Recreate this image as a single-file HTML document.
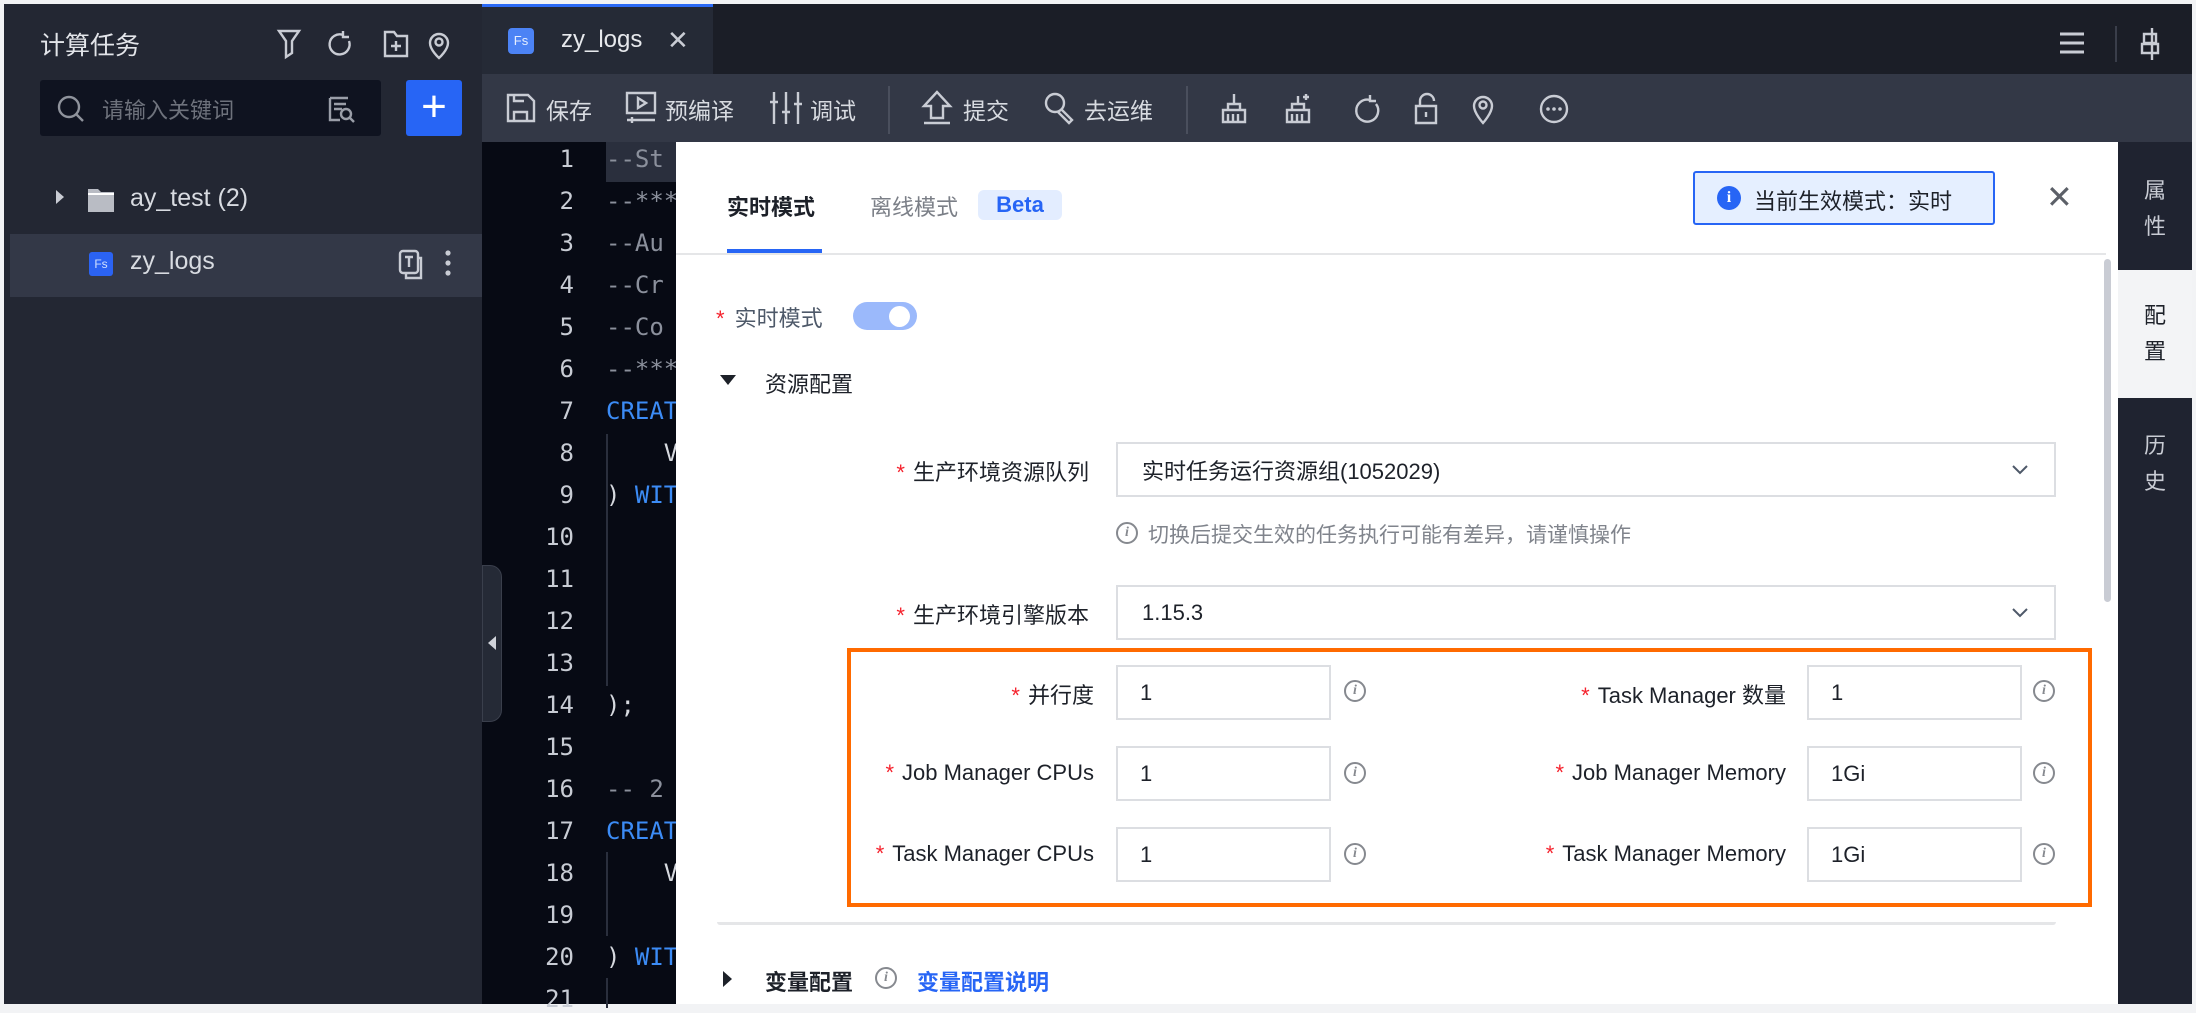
<!DOCTYPE html>
<html><head><meta charset="utf-8"><style>
*{box-sizing:border-box;margin:0;padding:0}
body{width:2196px;height:1008px;background:#f2f3f5;position:relative;overflow:hidden;font-family:"Liberation Sans","Noto Sans CJK SC",sans-serif}
.a{position:absolute}
.ic{stroke:#c9ccd4;fill:none;stroke-width:2.4}
.code{font-family:"DejaVu Sans Mono","Liberation Mono",monospace;font-size:24px;white-space:pre}
.ln{position:absolute;left:500px;width:74px;text-align:right;color:#c8ccd4}
.ct{position:absolute;left:606px;color:#8b909c}
.bl{color:#3c8cf6}
.wh{color:#d6d9df}
.lab{position:absolute;font-size:22px;color:#1d2129;text-align:right;white-space:nowrap}
.req{color:#f5222d;margin-right:8px}
.inp{position:absolute;border:2px solid #dcdee2;background:#fff;font-size:22px;color:#1d2129;padding-left:22px;display:flex;align-items:center}
.info{position:absolute;width:22px;height:22px;border:2px solid #86898f;border-radius:50%;color:#86898f;font-size:14px;font-style:italic;font-weight:bold;text-align:center;line-height:18px;font-family:"Liberation Serif",serif}
</style></head><body>
<div class="a" style="left:4px;top:4px;width:478px;height:1000px;background:#232733"></div>
<div class="a" style="left:40px;top:26px;font-size:25px;color:#e2e4e9">计算任务</div>
<svg class="a" style="left:275px;top:26px" width="180" height="36" viewBox="0 0 180 36">
<path class="ic" d="M4 5h20l-7 10v12l-6 4V15z"/>
<path class="ic" d="M68 9a10 10 0 1 0 6 6M68 5v6h6" />
<path class="ic" d="M110 6h9l3 4h10v20h-22z M121 15v10M116 20h10"/>
<path class="ic" d="M173 17a9 9 0 1 0-18 0c0 7 9 15 9 15s9-8 9-15z"/><circle class="ic" cx="164" cy="16" r="3.5"/>
</svg>
<div class="a" style="left:40px;top:80px;width:341px;height:56px;background:#0f1320;border-radius:3px"></div>
<svg class="a" style="left:56px;top:94px" width="30" height="30"><circle class="ic" cx="13" cy="13" r="10" style="stroke:#8f939c"/><path class="ic" d="M20 20l7 7" style="stroke:#8f939c"/></svg>
<div class="a" style="left:102px;top:93px;font-size:22px;color:#6e727c">请输入关键词</div>
<svg class="a" style="left:326px;top:94px" width="30" height="30"><path class="ic" d="M4 4h18M4 4v22h10M8 10h12M8 15h8" style="stroke:#9a9ea8"/><circle class="ic" cx="20" cy="20" r="5" style="stroke:#9a9ea8"/><path class="ic" d="M24 24l4 4" style="stroke:#9a9ea8"/></svg>
<div class="a" style="left:406px;top:80px;width:56px;height:56px;background:#2765f5;border-radius:3px;color:#fff;font-size:44px;line-height:54px;text-align:center;font-weight:300">+</div>
<div class="a" style="left:56px;top:190px;width:0;height:0;border-left:8px solid #c9ccd4;border-top:7px solid transparent;border-bottom:7px solid transparent"></div>
<svg class="a" style="left:86px;top:185px" width="30" height="30"><path d="M2 4h10l3 3h13v20H2z" fill="#b9bcc4"/><path d="M2 9h26" stroke="#fff" stroke-width="2"/></svg>
<div class="a" style="left:130px;top:184px;font-size:25px;color:#d8dbe1">ay_test (2)</div>
<div class="a" style="left:10px;top:234px;width:472px;height:63px;background:#333847"></div>
<div class="a" style="left:89px;top:252px;width:24px;height:24px;background:#2b63f3;border-radius:3px;color:#cfe0ff;font-size:12px;text-align:center;line-height:24px">Fs</div>
<div class="a" style="left:130px;top:247px;font-size:25px;color:#d8dbe1">zy_logs</div>
<svg class="a" style="left:398px;top:248px" width="56" height="34"><rect class="ic" x="2" y="3" width="18" height="22" rx="3"/><path class="ic" d="M7 9h8M11 9v10M20 10h3v20H8v-5"/><circle cx="50" cy="5" r="2.6" fill="#c9ccd4"/><circle cx="50" cy="15" r="2.6" fill="#c9ccd4"/><circle cx="50" cy="25" r="2.6" fill="#c9ccd4"/></svg>

<div class="a" style="left:482px;top:4px;width:1710px;height:70px;background:#1b1e27"></div>
<div class="a" style="left:482px;top:4px;width:231px;height:70px;background:#252a36;border-top:3px solid #2b6af5"></div>
<div class="a" style="left:508px;top:28px;width:26px;height:26px;background:#4c83f5;border-radius:4px;color:#e6eeff;font-size:13px;text-align:center;line-height:26px">Fs</div>
<div class="a" style="left:561px;top:26px;font-size:24px;color:#e6e8ec">zy_logs</div>
<div class="a" style="left:667px;top:25px;font-size:26px;color:#c9ccd4">✕</div>
<svg class="a" style="left:2056px;top:26px" width="140" height="36"><path d="M4 8h24M4 17h24M4 26h24" stroke="#c9ccd4" stroke-width="3"/><path d="M60 0v36" stroke="#3a3e4a" stroke-width="2"/><path class="ic" d="M96 2v32M88 8h12v9H88zM86 18h16v9H86z"/></svg>

<div class="a" style="left:482px;top:74px;width:1710px;height:68px;background:#333846"></div>
<svg class="a" style="left:505px;top:92px" width="32" height="32"><path class="ic" d="M3 3h20l6 6v20H3z M9 29v-9h13v9M9 3v6h10"/></svg>
<div class="a" style="left:546px;top:92px;font-size:23px;color:#d8dbe1">保存</div>
<svg class="a" style="left:624px;top:90px" width="34" height="36"><path class="ic" d="M3 3h28v20H3z M14 8l8 5-8 5z M3 30h28M8 27v6"/></svg>
<div class="a" style="left:665px;top:92px;font-size:23px;color:#d8dbe1">预编译</div>
<svg class="a" style="left:769px;top:90px" width="34" height="36"><path class="ic" d="M5 2v32M17 2v32M29 2v32M1 12h8M13 22h8M25 14h8"/></svg>
<div class="a" style="left:810px;top:92px;font-size:23px;color:#d8dbe1">调试</div>
<div class="a" style="left:888px;top:86px;width:2px;height:48px;background:#4a4f5d"></div>
<svg class="a" style="left:920px;top:90px" width="34" height="36"><path class="ic" d="M17 2L4 16h7v12h12V16h7z M4 33h26"/></svg>
<div class="a" style="left:963px;top:92px;font-size:23px;color:#d8dbe1">提交</div>
<svg class="a" style="left:1042px;top:90px" width="34" height="36"><circle class="ic" cx="13" cy="13" r="9"/><path class="ic" d="M19 19l11 11-3 3-11-11"/></svg>
<div class="a" style="left:1084px;top:92px;font-size:23px;color:#d8dbe1">去运维</div>
<div class="a" style="left:1186px;top:86px;width:2px;height:48px;background:#4a4f5d"></div>
<svg class="a" style="left:1220px;top:92px" width="360" height="34" viewBox="0 0 360 34">
<path class="ic" d="M14 2v10M8 12h12v6H8zM3 18h22v12H3zM8 22v8M13 22v8M18 22v8"/>
<path class="ic" d="M78 4v8M72 12h12v6H72zM67 18h22v12H67zM72 22v8M77 22v8M82 22v8M86 2v6M83 5h6"/>
<path class="ic" d="M150 8a11 11 0 1 0 6 4M150 3v6h6"/>
<path class="ic" d="M200 14v-5a7 7 0 0 1 14 0M196 14h20v17h-20zM206 20v5"/>
<path class="ic" d="M272 14a9 9 0 1 0-18 0c0 7 9 17 9 17s9-10 9-17z"/><circle class="ic" cx="263" cy="13" r="3.5"/>
<circle class="ic" cx="334" cy="17" r="13"/><circle cx="328" cy="17" r="1.8" fill="#c9ccd4"/><circle cx="334" cy="17" r="1.8" fill="#c9ccd4"/><circle cx="340" cy="17" r="1.8" fill="#c9ccd4"/>
</svg>

<div class="a" style="left:482px;top:142px;width:200px;height:862px;background:#070a14"></div>
<div class="a" style="left:606px;top:142px;width:80px;height:40px;background:#2a2f3d"></div>
<div class="a" style="left:606px;top:434px;width:2px;height:84px;background:#2a2f3d"></div>
<div class="a" style="left:606px;top:518px;width:2px;height:168px;background:#2a2f3d"></div>
<div class="a" style="left:606px;top:852px;width:2px;height:84px;background:#2a2f3d"></div>
<div class="a" style="left:606px;top:978px;width:2px;height:30px;background:#2a2f3d"></div>
<div class="code">
<div class="ln" style="top:145px">1</div><div class="ct" style="top:145px">--St</div>
<div class="ln" style="top:187px">2</div><div class="ct" style="top:187px">--***</div>
<div class="ln" style="top:229px">3</div><div class="ct" style="top:229px">--Au</div>
<div class="ln" style="top:271px">4</div><div class="ct" style="top:271px">--Cr</div>
<div class="ln" style="top:313px">5</div><div class="ct" style="top:313px">--Co</div>
<div class="ln" style="top:355px">6</div><div class="ct" style="top:355px">--***</div>
<div class="ln" style="top:397px">7</div><div class="ct bl" style="top:397px">CREAT</div>
<div class="ln" style="top:439px">8</div><div class="ct wh" style="top:439px">    V</div>
<div class="ln" style="top:481px">9</div><div class="ct wh" style="top:481px">) <span class="bl">WIT</span></div>
<div class="ln" style="top:523px">10</div>
<div class="ln" style="top:565px">11</div>
<div class="ln" style="top:607px">12</div>
<div class="ln" style="top:649px">13</div>
<div class="ln" style="top:691px">14</div><div class="ct wh" style="top:691px">);</div>
<div class="ln" style="top:733px">15</div>
<div class="ln" style="top:775px">16</div><div class="ct" style="top:775px">-- 2</div>
<div class="ln" style="top:817px">17</div><div class="ct bl" style="top:817px">CREAT</div>
<div class="ln" style="top:859px">18</div><div class="ct wh" style="top:859px">    V</div>
<div class="ln" style="top:901px">19</div>
<div class="ln" style="top:943px">20</div><div class="ct wh" style="top:943px">) <span class="bl">WIT</span></div>
<div class="ln" style="top:985px">21</div>
</div>
<div class="a" style="left:482px;top:565px;width:20px;height:157px;background:#252a36;border-radius:0 12px 12px 0;border:1px solid #3a3f4c"></div>
<div class="a" style="left:488px;top:636px;width:0;height:0;border-right:8px solid #d0d3da;border-top:7px solid transparent;border-bottom:7px solid transparent"></div>

<div class="a" style="left:676px;top:142px;width:1442px;height:862px;background:#fff"></div>
<div class="a" style="left:727px;top:190px;font-size:22px;color:#1d2129;font-weight:bold">实时模式</div>
<div class="a" style="left:727px;top:249px;width:95px;height:4px;background:#2765f5"></div>
<div class="a" style="left:870px;top:190px;font-size:22px;color:#7b7f87">离线模式</div>
<div class="a" style="left:978px;top:190px;width:84px;height:30px;background:#e3edff;border-radius:6px;color:#2765f5;font-size:22px;font-weight:bold;text-align:center;line-height:30px">Beta</div>
<div class="a" style="left:676px;top:253px;width:1430px;height:2px;background:#e5e6e8"></div>
<div class="a" style="left:1693px;top:171px;width:302px;height:54px;background:#e5efff;border:2px solid #2765f5;border-radius:3px"></div>
<div class="a" style="left:1717px;top:186px;width:24px;height:24px;border-radius:50%;background:#2765f5;color:#fff;font-size:16px;font-weight:bold;text-align:center;line-height:24px;font-family:'Liberation Serif',serif">i</div>
<div class="a" style="left:1754px;top:184px;font-size:22px;color:#1d2129">当前生效模式：实时</div>
<div class="a" style="left:2046px;top:178px;font-size:32px;color:#5c6068">✕</div>
<div class="a" style="left:2104px;top:259px;width:7px;height:343px;background:#c9ccd4;border-radius:4px"></div>

<div class="a" style="left:716px;top:301px;font-size:22px;color:#4e5969"><span class="req" style="margin-right:10px">*</span>实时模式</div>
<div class="a" style="left:853px;top:302px;width:64px;height:28px;border-radius:14px;background:#9bb9fb"></div>
<div class="a" style="left:889px;top:306px;width:21px;height:21px;border-radius:50%;background:#fff"></div>
<div class="a" style="left:720px;top:375px;width:0;height:0;border-top:10px solid #1d2129;border-left:8px solid transparent;border-right:8px solid transparent"></div>
<div class="a" style="left:765px;top:367px;font-size:22px;color:#1d2129">资源配置</div>

<div class="lab" style="right:1107px;top:455px"><span class="req">*</span>生产环境资源队列</div>
<div class="inp" style="left:1116px;top:442px;width:940px;height:55px;padding-left:24px">实时任务运行资源组(1052029)</div>
<svg class="a" style="left:2010px;top:460px" width="20" height="20"><path d="M3 6l7 7 7-7" stroke="#4e5969" stroke-width="2" fill="none"/></svg>
<div class="info" style="left:1116px;top:522px;width:22px;height:22px">i</div>
<div class="a" style="left:1148px;top:519px;font-size:21px;color:#80848c">切换后提交生效的任务执行可能有差异，请谨慎操作</div>
<div class="lab" style="right:1107px;top:598px"><span class="req">*</span>生产环境引擎版本</div>
<div class="inp" style="left:1116px;top:585px;width:940px;height:55px;padding-left:24px">1.15.3</div>
<svg class="a" style="left:2010px;top:603px" width="20" height="20"><path d="M3 6l7 7 7-7" stroke="#4e5969" stroke-width="2" fill="none"/></svg>

<div class="a" style="left:717px;top:922px;width:1339px;height:3px;border-radius:0 0 6px 6px;background:#e5e6e8"></div>
<div class="a" style="left:847px;top:648px;width:1245px;height:259px;border:4px solid #ff6a00"></div>

<div class="lab" style="right:1102px;top:678px"><span class="req">*</span>并行度</div>
<div class="inp" style="left:1116px;top:665px;width:215px;height:55px">1</div>
<div class="info" style="left:1344px;top:680px">i</div>
<div class="lab" style="right:410px;top:678px"><span class="req">*</span>Task Manager 数量</div>
<div class="inp" style="left:1807px;top:665px;width:215px;height:55px">1</div>
<div class="info" style="left:2033px;top:680px">i</div>

<div class="lab" style="right:1102px;top:760px"><span class="req">*</span>Job Manager CPUs</div>
<div class="inp" style="left:1116px;top:746px;width:215px;height:55px">1</div>
<div class="info" style="left:1344px;top:762px">i</div>
<div class="lab" style="right:410px;top:760px"><span class="req">*</span>Job Manager Memory</div>
<div class="inp" style="left:1807px;top:746px;width:215px;height:55px">1Gi</div>
<div class="info" style="left:2033px;top:762px">i</div>

<div class="lab" style="right:1102px;top:841px"><span class="req">*</span>Task Manager CPUs</div>
<div class="inp" style="left:1116px;top:827px;width:215px;height:55px">1</div>
<div class="info" style="left:1344px;top:843px">i</div>
<div class="lab" style="right:410px;top:841px"><span class="req">*</span>Task Manager Memory</div>
<div class="inp" style="left:1807px;top:827px;width:215px;height:55px">1Gi</div>
<div class="info" style="left:2033px;top:843px">i</div>

<div class="a" style="left:723px;top:971px;width:0;height:0;border-left:9px solid #1d2129;border-top:8px solid transparent;border-bottom:8px solid transparent"></div>
<div class="a" style="left:765px;top:965px;font-size:22px;color:#1d2129;font-weight:bold">变量配置</div>
<div class="info" style="left:875px;top:967px">i</div>
<div class="a" style="left:917px;top:965px;font-size:22px;color:#2765f5;font-weight:bold">变量配置说明</div>

<div class="a" style="left:2118px;top:142px;width:74px;height:862px;background:#1f2330"></div>
<div class="a" style="left:2118px;top:270px;width:74px;height:128px;background:#f3f4f6"></div>
<div class="a" style="left:2144px;top:173px;font-size:22px;color:#c9ccd4;line-height:36px;width:24px">属性</div>
<div class="a" style="left:2144px;top:298px;font-size:22px;color:#1d2129;line-height:36px;width:24px">配置</div>
<div class="a" style="left:2144px;top:428px;font-size:22px;color:#c9ccd4;line-height:36px;width:24px">历史</div>
</body></html>
